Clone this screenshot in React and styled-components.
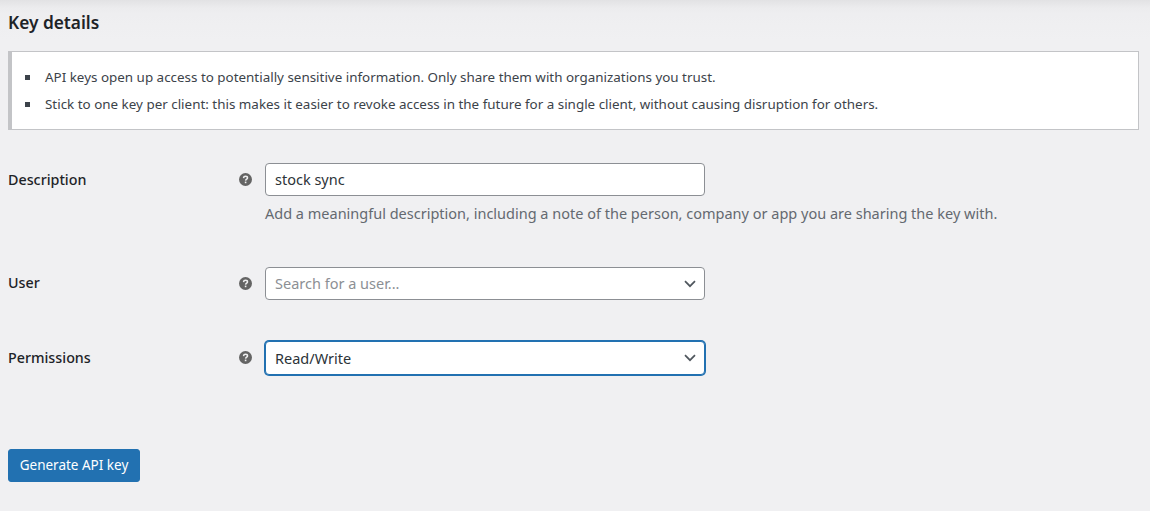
import React from "react";
import styled, { createGlobalStyle } from "styled-components";

const GlobalStyle = createGlobalStyle`
  html, body {
    margin: 0;
    padding: 0;
    background: #f0f0f1;
  }
`;

const Page = styled.div`
  box-sizing: border-box;
  height: 511px;
  overflow: hidden;
  padding: 12px 11px 0 8px;
  background: linear-gradient(to bottom, #e2e2e4 0, #ececee 8px, #eeeef0 14px, #f0f0f2 40px);
  font-family: "Noto Sans", "Open Sans", sans-serif;
  color: #2c3338;
`;

const Heading = styled.h2`
  margin: 0 0 18px;
  font-size: 17.3px;
  line-height: 21px;
  font-weight: 600;
  color: #1d2327;
`;

/* ================= NOTICE ================= */

const Notice = styled.ul`
  box-sizing: border-box;
  height: 79px;
  margin: 0 0 33px;
  padding: 12px 0 0 33px;
  list-style: none;
  background: #fff;
  border: 1px solid #c3c4c7;
  border-left-width: 4px;
`;

const NoticeItem = styled.li`
  position: relative;
  height: 27px;
  font-size: 13.42px;
  line-height: 27px;
  color: #3c434a;

  &::before {
    content: "";
    position: absolute;
    left: -20px;
    top: 11px;
    width: 5px;
    height: 5px;
    background: #3c434a;
  }
`;

/* ================= FORM ================= */

const FormRow = styled.div`
  display: grid;
  grid-template-columns: 230px 27px 440px;
  align-items: start;
  margin-bottom: ${(props) => props.$gap}px;
`;

const Label = styled.label`
  margin-top: ${(props) => (props.$lift ? -1 : 0)}px;
  font-size: 14.3px;
  line-height: 33px;
  font-weight: 500;
  color: #1d2327;
`;

const HelpWrap = styled.span`
  display: flex;
  height: 33px;
  align-items: center;
  padding-left: 1px;
`;

const Field = styled.div`
  box-sizing: border-box;
  display: flex;
  align-items: center;
  justify-content: space-between;
  height: ${(props) => (props.$focused ? 34 : 33)}px;
  padding: 0 8px 0 9px;
  background: #fff;
  border: 1px solid ${(props) => (props.$focused ? "#2271b1" : "#8c8f94")};
  border-radius: 4px;
  box-shadow: ${(props) => (props.$focused ? "0 0 0 1px #2271b1" : "none")};
  font-size: 14.5px;
  color: ${(props) => (props.$placeholder ? "#8c8f94" : "#2c3338")};
`;

const FieldText = styled.span`
  margin-top: ${(props) => (props.$raised ? -2 : 0)}px;
`;

const Hint = styled.p`
  grid-column: 3;
  width: 800px;
  margin: 6px 0 1px;
  font-size: 14.5px;
  line-height: 22px;
  color: #646970;
`;

const SubmitButton = styled.button`
  display: block;
  box-sizing: border-box;
  width: 132px;
  height: 33px;
  padding: 0 0 2px;
  background: #2271b1;
  border: 1px solid #2271b1;
  border-radius: 3px;
  color: #fff;
  font-family: inherit;
  font-size: 13.5px;
  cursor: pointer;
`;

const HelpIcon = () => (
  <svg width="13" height="13" viewBox="0 0 13 13">
    <circle cx="6.5" cy="6.5" r="6.5" fill="#646464" />
    <path
      d="M4.5 5.1C4.6 3.9 5.4 3.3 6.5 3.3C7.7 3.3 8.5 4 8.5 4.9C8.5 6.2 6.7 6.2 6.6 7.6"
      fill="none"
      stroke="#f0f0f1"
      strokeWidth="1.5"
    />
    <rect x="5.8" y="8.6" width="1.6" height="1.6" fill="#f0f0f1" />
  </svg>
);

const Chevron = () => (
  <svg width="12" height="8" viewBox="0 0 12 8">
    <path d="M1 1.2L6 6.2L11 1.2" fill="none" stroke="#50575e" strokeWidth="1.7" />
  </svg>
);

const App = () => (
  <>
    <GlobalStyle />
    <Page>
      <Heading>Key details</Heading>
      <Notice>
        <NoticeItem>
          API keys open up access to potentially sensitive information. Only share them with organizations you trust.
        </NoticeItem>
        <NoticeItem>
          Stick to one key per client: this makes it easier to revoke access in the future for a single client, without causing disruption for others.
        </NoticeItem>
      </Notice>

      <FormRow $gap={42}>
        <Label>Description</Label>
        <HelpWrap><HelpIcon /></HelpWrap>
        <Field>
          <FieldText $raised>stock sync</FieldText>
        </Field>
        <Hint>Add a meaningful description, including a note of the person, company or app you are sharing the key with.</Hint>
      </FormRow>

      <FormRow $gap={41}>
        <Label $lift>User</Label>
        <HelpWrap><HelpIcon /></HelpWrap>
        <Field $placeholder>
          <FieldText $raised>Search for a user...</FieldText>
          <Chevron />
        </Field>
      </FormRow>

      <FormRow $gap={74}>
        <Label>Permissions</Label>
        <HelpWrap><HelpIcon /></HelpWrap>
        <Field $focused>
          <FieldText>Read/Write</FieldText>
          <Chevron />
        </Field>
      </FormRow>

      <SubmitButton>Generate API key</SubmitButton>
    </Page>
  </>
);

export default App;
